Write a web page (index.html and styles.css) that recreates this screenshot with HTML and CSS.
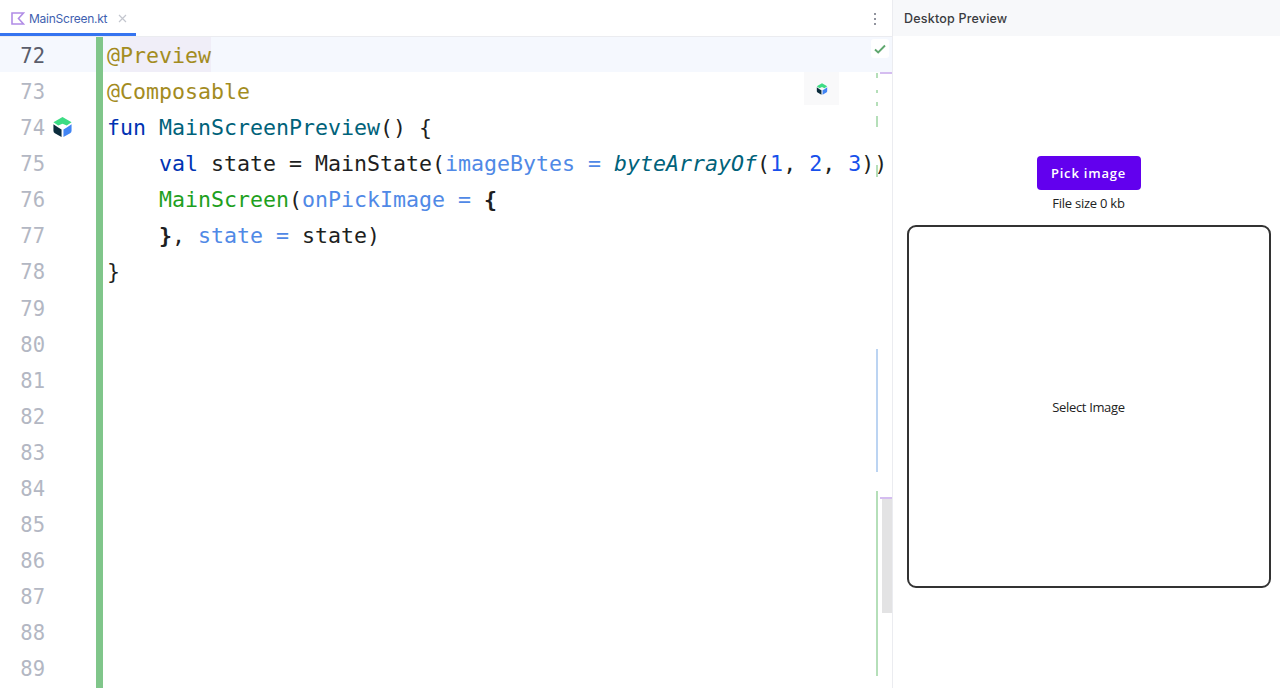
FILE: index.html
```html
<!DOCTYPE html>
<html lang="en">

<head>
    <meta charset="UTF-8">
    <title>MainScreen.kt</title>
    <link rel="stylesheet" href="styles.css">
</head>

<body>
    <div class="wrap">
        <!-- editor -->
        <div class="editor">
            <div class="tabbar">
                <div class="tab">
                    <svg class="kt-icon" width="14" height="13" viewBox="0 0 14 13" fill="none">
                        <path d="M1 1H12.5L7.5 6.5L12.5 12H1Z" stroke="#b18ce6" stroke-width="1.6"/>
                    </svg>
                    <span class="tab-name">MainScreen.kt</span>
                    <svg class="tab-close" width="9" height="9" viewBox="0 0 9 9">
                        <path d="M1 1L8 8M8 1L1 8" stroke="#c3c6ce" stroke-width="1.2"/>
                    </svg>
                </div>
                <div class="tab-more">
                    <i></i><i></i><i></i>
                </div>
            </div>

            <div class="code">
                <div class="line current">
                    <span class="num">72</span><span class="gut"></span>
                    <span class="src"><span class="anno">@<span class="hl">Preview</span></span></span>
                </div>
                <div class="line">
                    <span class="num">73</span><span class="gut"></span>
                    <span class="src"><span class="anno">@Composable</span></span>
                </div>
                <div class="line">
                    <span class="num">74</span>
                    <span class="gut">
                        <svg width="21" height="22" viewBox="0 0 22 22">
                            <path d="M11 0.5L20.5 6L15.5 9.5L11 7.5L6.5 9.5L1.5 6Z" fill="#3ddc84"/>
                            <path d="M1.5 8L6.5 11.5L10 13.5V21.5L3 17.5Q1.5 16.7 1.5 15Z" fill="#0b2c3d"/>
                            <path d="M20.5 8L15.5 11.5L12 13.5V21.5L19 17.5Q20.5 16.7 20.5 15Z" fill="#4285f4"/>
                        </svg>
                    </span>
                    <span class="src"><span class="kw">fun</span> <span class="fn">MainScreenPreview</span>() {</span>
                </div>
                <div class="line">
                    <span class="num">75</span><span class="gut"></span>
                    <span class="src">    <span class="kw">val</span> state = MainState(<span class="param">imageBytes =</span> <span class="call">byteArrayOf</span>(<span class="lit">1</span>, <span class="lit">2</span>, <span class="lit">3</span>))</span>
                </div>
                <div class="line">
                    <span class="num">76</span><span class="gut"></span>
                    <span class="src">    <span class="comp">MainScreen</span>(<span class="param">onPickImage =</span> <b>{</b></span>
                </div>
                <div class="line">
                    <span class="num">77</span><span class="gut"></span>
                    <span class="src">    <b>}</b>, <span class="param">state =</span> state)</span>
                </div>
                <div class="line">
                    <span class="num">78</span><span class="gut"></span>
                    <span class="src">}</span>
                </div>
                <div class="line"><span class="num">79</span></div>
                <div class="line"><span class="num">80</span></div>
                <div class="line"><span class="num">81</span></div>
                <div class="line"><span class="num">82</span></div>
                <div class="line"><span class="num">83</span></div>
                <div class="line"><span class="num">84</span></div>
                <div class="line"><span class="num">85</span></div>
                <div class="line"><span class="num">86</span></div>
                <div class="line"><span class="num">87</span></div>
                <div class="line"><span class="num">88</span></div>
                <div class="line"><span class="num">89</span></div>

                <!-- change bar in gutter -->
                <div class="change-bar"></div>

                <!-- floating icons -->
                <div class="check-box">
                    <svg width="12" height="10" viewBox="0 0 12 10" fill="none">
                        <path d="M1 5.5L4.2 8.5L11 1.5" stroke="#5fa76f" stroke-width="1.9"/>
                    </svg>
                </div>
                <div class="preview-btn">
                    <svg width="12" height="12" viewBox="0 0 22 22">
                        <path d="M11 0.5L20.5 6L15.5 9.5L11 7.5L6.5 9.5L1.5 6Z" fill="#3ddc84"/>
                        <path d="M1.5 8L6.5 11.5L10 13.5V21.5L3 17.5Q1.5 16.7 1.5 15Z" fill="#0b2c3d"/>
                        <path d="M20.5 8L15.5 11.5L12 13.5V21.5L19 17.5Q20.5 16.7 20.5 15Z" fill="#4285f4"/>
                    </svg>
                </div>

                <!-- scrollbar marks -->
                <div class="mark green m1"></div>
                <div class="mark green m2"></div>
                <div class="mark green m3"></div>
                <div class="mark green m4"></div>
                <div class="mark green m5"></div>
                <div class="mark blue m6"></div>
                <div class="mark green m7"></div>
                <div class="thumb"></div>
                <div class="tick t1"></div>
                <div class="tick t2"></div>
            </div>
        </div>

        <!-- preview -->
        <div class="preview">
            <div class="preview-head">Desktop Preview</div>
            <div class="preview-body">
                <button class="pick">Pick image</button>
                <p class="size">File size 0 kb</p>
                <div class="imgbox">Select Image</div>
            </div>
        </div>
    </div>
</body>

</html>
```

FILE: styles.css
```css
html,
body {
    margin: 0;
    padding: 0;
    height: 100vh;
    overflow: hidden;
    background: #fff;
}

.wrap {
    display: flex;
    height: 688px;
}

/* editor */
.editor {
    width: 892px;
    flex: none;
    display: flex;
    flex-direction: column;
    border-right: 1px solid #ebecf0;
}

.tabbar {
    display: flex;
    align-items: flex-start;
    justify-content: space-between;
    height: 37px;
    flex: none;
    box-sizing: border-box;
    border-bottom: 1px solid #ebecf0;
}

.tab {
    display: flex;
    align-items: center;
    box-sizing: border-box;
    width: 136px;
    height: 36px;
    padding: 3px 0 0 11px;
    border-bottom: 3px solid #3574f0;
}

.tab-name {
    margin-left: 4px;
    font: 12px "Inter", sans-serif;
    letter-spacing: -0.25px;
    color: #3f5fb0;
}

.tab-close {
    margin-left: 11px;
}

.tab-more {
    display: flex;
    flex-direction: column;
    gap: 3px;
    margin: 13px 16px 0 0;
}

.tab-more i {
    width: 2px;
    height: 2px;
    background: #6c707e;
    border-radius: 50%;
}

/* code */
.code {
    position: relative;
    flex: 1;
    overflow: hidden;
    font: 21.6px/38px "DejaVu Sans Mono", monospace;
    color: #1e1f22;
}

.line {
    display: flex;
    height: 36.08px;
}

.line.current {
    background: linear-gradient(#f5f8fe 35px, transparent 35px);
}

.num {
    width: 45px;
    flex: none;
    text-align: right;
    font-size: 20.5px;
    color: #b3b7c3;
}

.current .num {
    color: #5a5d6b;
}

.gut {
    display: flex;
    align-items: center;
    width: 62px;
    height: 36px;
    flex: none;
    padding-left: 7px;
    box-sizing: border-box;
}

.src {
    white-space: pre;
}

.src b {
    font-weight: bold;
}

.anno {
    color: #a38c1f;
}

.hl {
    background: linear-gradient(#f0eef8 35px, transparent 35px);
    display: inline-block;
}

.kw {
    color: #0033b3;
}

.fn {
    color: #00627a;
}

.param {
    color: #5089e6;
}

.call {
    color: #00627a;
    font-style: italic;
}

.lit {
    color: #1750eb;
}

.comp {
    color: #1ea01e;
}

.change-bar {
    position: absolute;
    left: 96px;
    top: 0;
    bottom: 0;
    width: 7px;
    background: #80c68a;
}

.check-box {
    position: absolute;
    top: 2px;
    left: 871px;
    width: 18px;
    height: 19px;
    background: #fff;
    border-radius: 3px;
    display: flex;
    align-items: center;
    justify-content: center;
}

.preview-btn {
    position: absolute;
    top: 35px;
    left: 804px;
    width: 35px;
    height: 33px;
    background: #f9f9fa;
    display: flex;
    align-items: center;
    justify-content: center;
}

/* scrollbar marks */
.mark {
    position: absolute;
    left: 876px;
    width: 2px;
}

.green {
    background: #b5dfb9;
}

.blue {
    background: #bcd4f2;
}

.m1 { top: 36px; height: 5px; }
.m2 { top: 53px; height: 3px; }
.m3 { top: 65px; height: 4px; }
.m4 { top: 79px; height: 11px; }
.m5 { top: 128px; height: 12px; }
.m6 { top: 312px; height: 123px; }
.m7 { top: 454px; height: 185px; }

.thumb {
    position: absolute;
    left: 882px;
    top: 461px;
    width: 10px;
    height: 115px;
    background: #e3e3e4;
}

.tick {
    position: absolute;
    left: 880px;
    width: 12px;
    height: 2px;
    background: #d5bdf0;
}

.t1 { top: 35px; }
.t2 { top: 460px; }

/* preview */
.preview {
    flex: 1;
    display: flex;
    flex-direction: column;
}

.preview-head {
    height: 36px;
    flex: none;
    box-sizing: border-box;
    padding-left: 11px;
    background: #f7f8fa;
    font: 500 12.5px/37px "Inter", sans-serif;
    letter-spacing: 0.2px;
    color: #3a3b40;
}

.preview-body {
    flex: 1;
    display: flex;
    flex-direction: column;
    align-items: center;
    padding: 120px 0 0 4px;
}

.pick {
    width: 104px;
    height: 34px;
    padding: 0;
    border: 0;
    border-radius: 4px;
    background: #6200ee;
    color: #fff;
    font: 600 13px "Open Sans", sans-serif;
    letter-spacing: 0.8px;
}

.size {
    margin: 4px 0 0;
    font: 13px/18px "Open Sans", sans-serif;
    letter-spacing: -0.25px;
    color: #222;
}

.imgbox {
    display: flex;
    align-items: center;
    justify-content: center;
    box-sizing: border-box;
    width: 364px;
    height: 363px;
    margin-top: 13px;
    border: 2px solid #333;
    border-radius: 9px;
    font: 13px "Open Sans", sans-serif;
    letter-spacing: -0.35px;
    color: #222;
}
```
